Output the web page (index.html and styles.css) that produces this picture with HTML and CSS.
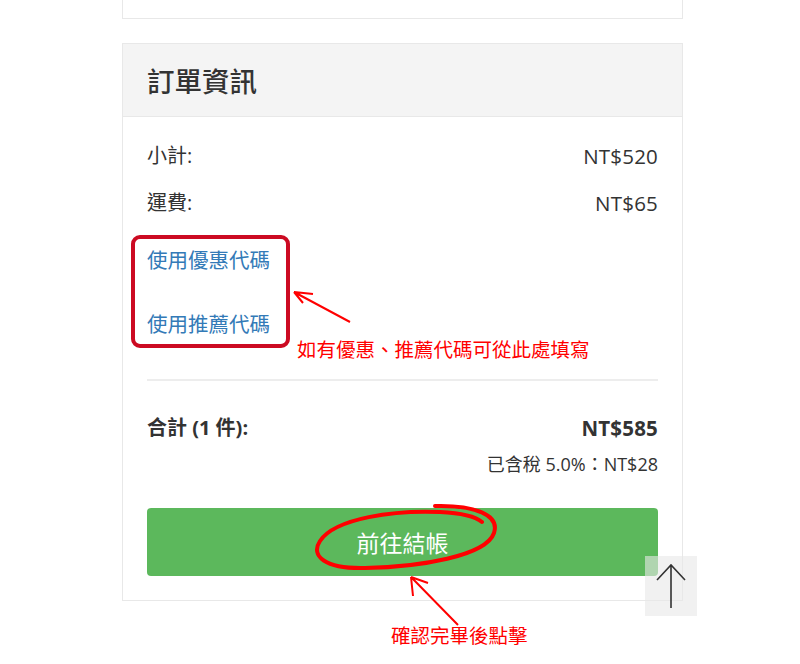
FILE: index.html
```html
<!DOCTYPE html>
<html lang="zh-Hant">
<head>
  <meta charset="UTF-8">
  <meta name="viewport" content="width=device-width, initial-scale=1.0">
  <title>訂單資訊</title>
  <link rel="stylesheet" href="styles.css">
</head>
<body>
  <div class="page">
    <!-- 上一張卡片的底部 -->
    <div class="card card-prev"></div>

    <!-- 訂單資訊 -->
    <div class="card">
      <div class="card-header">
        <h2>訂單資訊</h2>
      </div>
      <div class="card-body">
        <div class="row">
          <span>小計:</span>
          <span class="price">NT$520</span>
        </div>
        <div class="row">
          <span>運費:</span>
          <span class="price">NT$65</span>
        </div>
        <div class="codes">
          <a href="#" class="code-link">使用優惠代碼</a>
          <a href="#" class="code-link">使用推薦代碼</a>
        </div>
        <hr class="divider">
        <div class="row total">
          <span>合計 (1 件):</span>
          <span class="price">NT$585</span>
        </div>
        <div class="tax">已含稅 5.0%：NT$28</div>
        <button class="checkout-btn">前往結帳</button>
      </div>
    </div>
  </div>

  <!-- 回到頂部 -->
  <a href="#" class="back-top">
    <svg width="30" height="46" viewBox="0 0 30 46">
      <path d="M15 2 V45 M1 17 L15 2 L29 17" fill="none" stroke="#333" stroke-width="1.6"/>
    </svg>
  </a>

  <!-- 標註 -->
  <svg class="notes" width="800" height="664" viewBox="0 0 800 664">
    <rect x="133" y="237" width="155" height="109" rx="7" fill="none" stroke="#cc0a22" stroke-width="4"/>
    <path d="M350 322 L294 292 M294 292 L313 294 M294 292 L303 303" fill="none" stroke="#f00" stroke-width="2"/>
    <path d="M458 625 L411 577 M411 577 L413 596 M411 577 L428 583" fill="none" stroke="#f00" stroke-width="2"/>
    <path d="M435 506 C475 505 500 515 494 533 C486 556 420 567 365 568 C325 569 310 556 320 541 C335 518 395 510 440 512 C460 513 475 516 482 522"
          fill="none" stroke="#f00" stroke-width="4" stroke-linecap="round"/>
  </svg>
  <div class="note note-codes">如有優惠、推薦代碼可從此處填寫</div>
  <div class="note note-btn">確認完畢後點擊</div>
</body>
</html>
```

FILE: styles.css
```css
body {
  margin: 0;
  background: #fff;
  color: #333;
  font-family: "Open Sans", "Noto Sans CJK TC", sans-serif;
}
.page {
  width: 561px;
  margin-left: 122px;
}
.card {
  border: 1px solid #e8e8e8;
  background: #fff;
}
.card-prev {
  height: 18px;
  border-top: none;
  margin-bottom: 24px;
}
.card-header {
  background: #f4f4f4;
  border-bottom: 1px solid #e8e8e8;
  height: 72px;
  padding: 0 24px;
  display: flex;
  align-items: center;
}
.card-header h2 {
  margin: 0;
  font-size: 27.5px;
  font-weight: 500;
  color: #333;
}
.card-body {
  padding: 24px 24px 24px;
}
.row {
  display: flex;
  justify-content: space-between;
  align-items: center;
  font-size: 20px;
  line-height: 30px;
  margin-bottom: 17px;
}
.price {
  font-size: 20.5px;
  letter-spacing: 0.2px;
}
.codes {
  display: flex;
  flex-direction: column;
  gap: 34px;
  padding-top: 10px;
}
.code-link {
  color: #337ab7;
  text-decoration: none;
  font-size: 20.5px;
  line-height: 30px;
}
.divider {
  border: none;
  border-top: 2px solid #ededed;
  margin: 40px 0 32px;
}
.total {
  font-weight: 700;
  margin-bottom: 8px;
}
.tax {
  text-align: right;
  font-size: 18px;
  line-height: 26px;
}
.checkout-btn {
  display: block;
  width: 100%;
  height: 68px;
  margin-top: 31px;
  border: none;
  border-radius: 4px;
  background: #5cb85c;
  color: #fff;
  font-family: inherit;
  font-size: 23px;
  cursor: pointer;
}
.back-top {
  position: absolute;
  left: 645px;
  top: 556px;
  width: 52px;
  height: 60px;
  background: rgba(232, 232, 232, 0.6);
  display: flex;
  align-items: center;
  justify-content: center;
}
.notes {
  position: absolute;
  left: 0;
  top: 0;
  pointer-events: none;
}
.note {
  position: absolute;
  color: #f00;
  font-size: 19.5px;
  line-height: 24px;
  white-space: nowrap;
}
.note-codes {
  left: 297px;
  top: 338px;
}
.note-btn {
  left: 391px;
  top: 624px;
}
```
